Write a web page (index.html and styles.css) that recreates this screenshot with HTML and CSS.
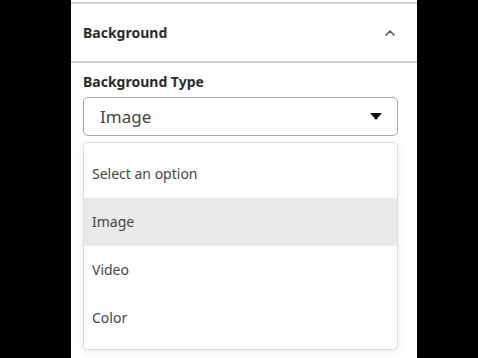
FILE: index.html
```html
<!DOCTYPE html>
<html lang="en">
<head>
    <meta charset="UTF-8">
    <title>Background settings</title>
    <link rel="stylesheet" href="styles.css">
</head>
<body>
    <div class="panel">
        <div class="section-header">
            <h2>Background</h2>
            <svg class="chevron" width="12" height="8" viewBox="0 0 12 8">
                <path d="M2 6 L6 2 L10 6" fill="none" stroke="#555" stroke-width="1.5" stroke-linecap="round" stroke-linejoin="round"/>
            </svg>
        </div>

        <div class="section-body">
            <label class="field-label">Background Type</label>
            <div class="select-box">
                <span class="select-value">Image</span>
                <svg class="caret" width="12" height="7" viewBox="0 0 12 7">
                    <path d="M0 0 H12 L6 7 Z" fill="#111"/>
                </svg>
            </div>
            <ul class="option-list">
                <li class="option">Select an option</li>
                <li class="option active">Image</li>
                <li class="option">Video</li>
                <li class="option">Color</li>
            </ul>
        </div>
    </div>
</body>
</html>
```

FILE: styles.css
```css
body {
    margin: 0;
    padding: 0;
    background-color: #000;
    font-family: "Noto Sans", Lato, sans-serif;
    color: #333;
}

.panel {
    width: 346px;
    height: 358px;
    margin-left: 71px;
    background-color: #fff;
    overflow: hidden;
}

.section-header {
    display: flex;
    align-items: center;
    justify-content: space-between;
    height: 57px;
    margin-top: 2px;
    padding: 0 21px 0 12px;
    border-top: 2px solid #d2d2d2;
    border-bottom: 2px solid #d2d2d2;
}

.section-header h2 {
    margin: 0;
    font-size: 14px;
    font-weight: 700;
    color: #2b2b2b;
}

.section-body {
    padding: 9px 19px 0 12px;
}

.field-label {
    display: block;
    font-size: 14px;
    font-weight: 700;
    line-height: 20px;
    color: #2b2b2b;
    margin-bottom: 5px;
}

.select-box {
    display: flex;
    align-items: center;
    justify-content: space-between;
    height: 37px;
    padding: 0 15px 0 16px;
    border: 1px solid #a9a9a9;
    border-radius: 5px;
}

.select-value {
    font-size: 17px;
    color: #444;
}

.option-list {
    list-style-type: none;
    margin: 6px 0 0 0;
    padding: 7px 0;
    border: 1px solid #dcdcdc;
    border-radius: 4px;
    box-shadow: 0 2px 8px rgba(0, 0, 0, 0.08);
}

.option {
    height: 48px;
    line-height: 48px;
    padding-left: 8px;
    font-size: 14px;
    color: #444;
}

.option.active {
    background-color: #e9e9e9;
}
```
